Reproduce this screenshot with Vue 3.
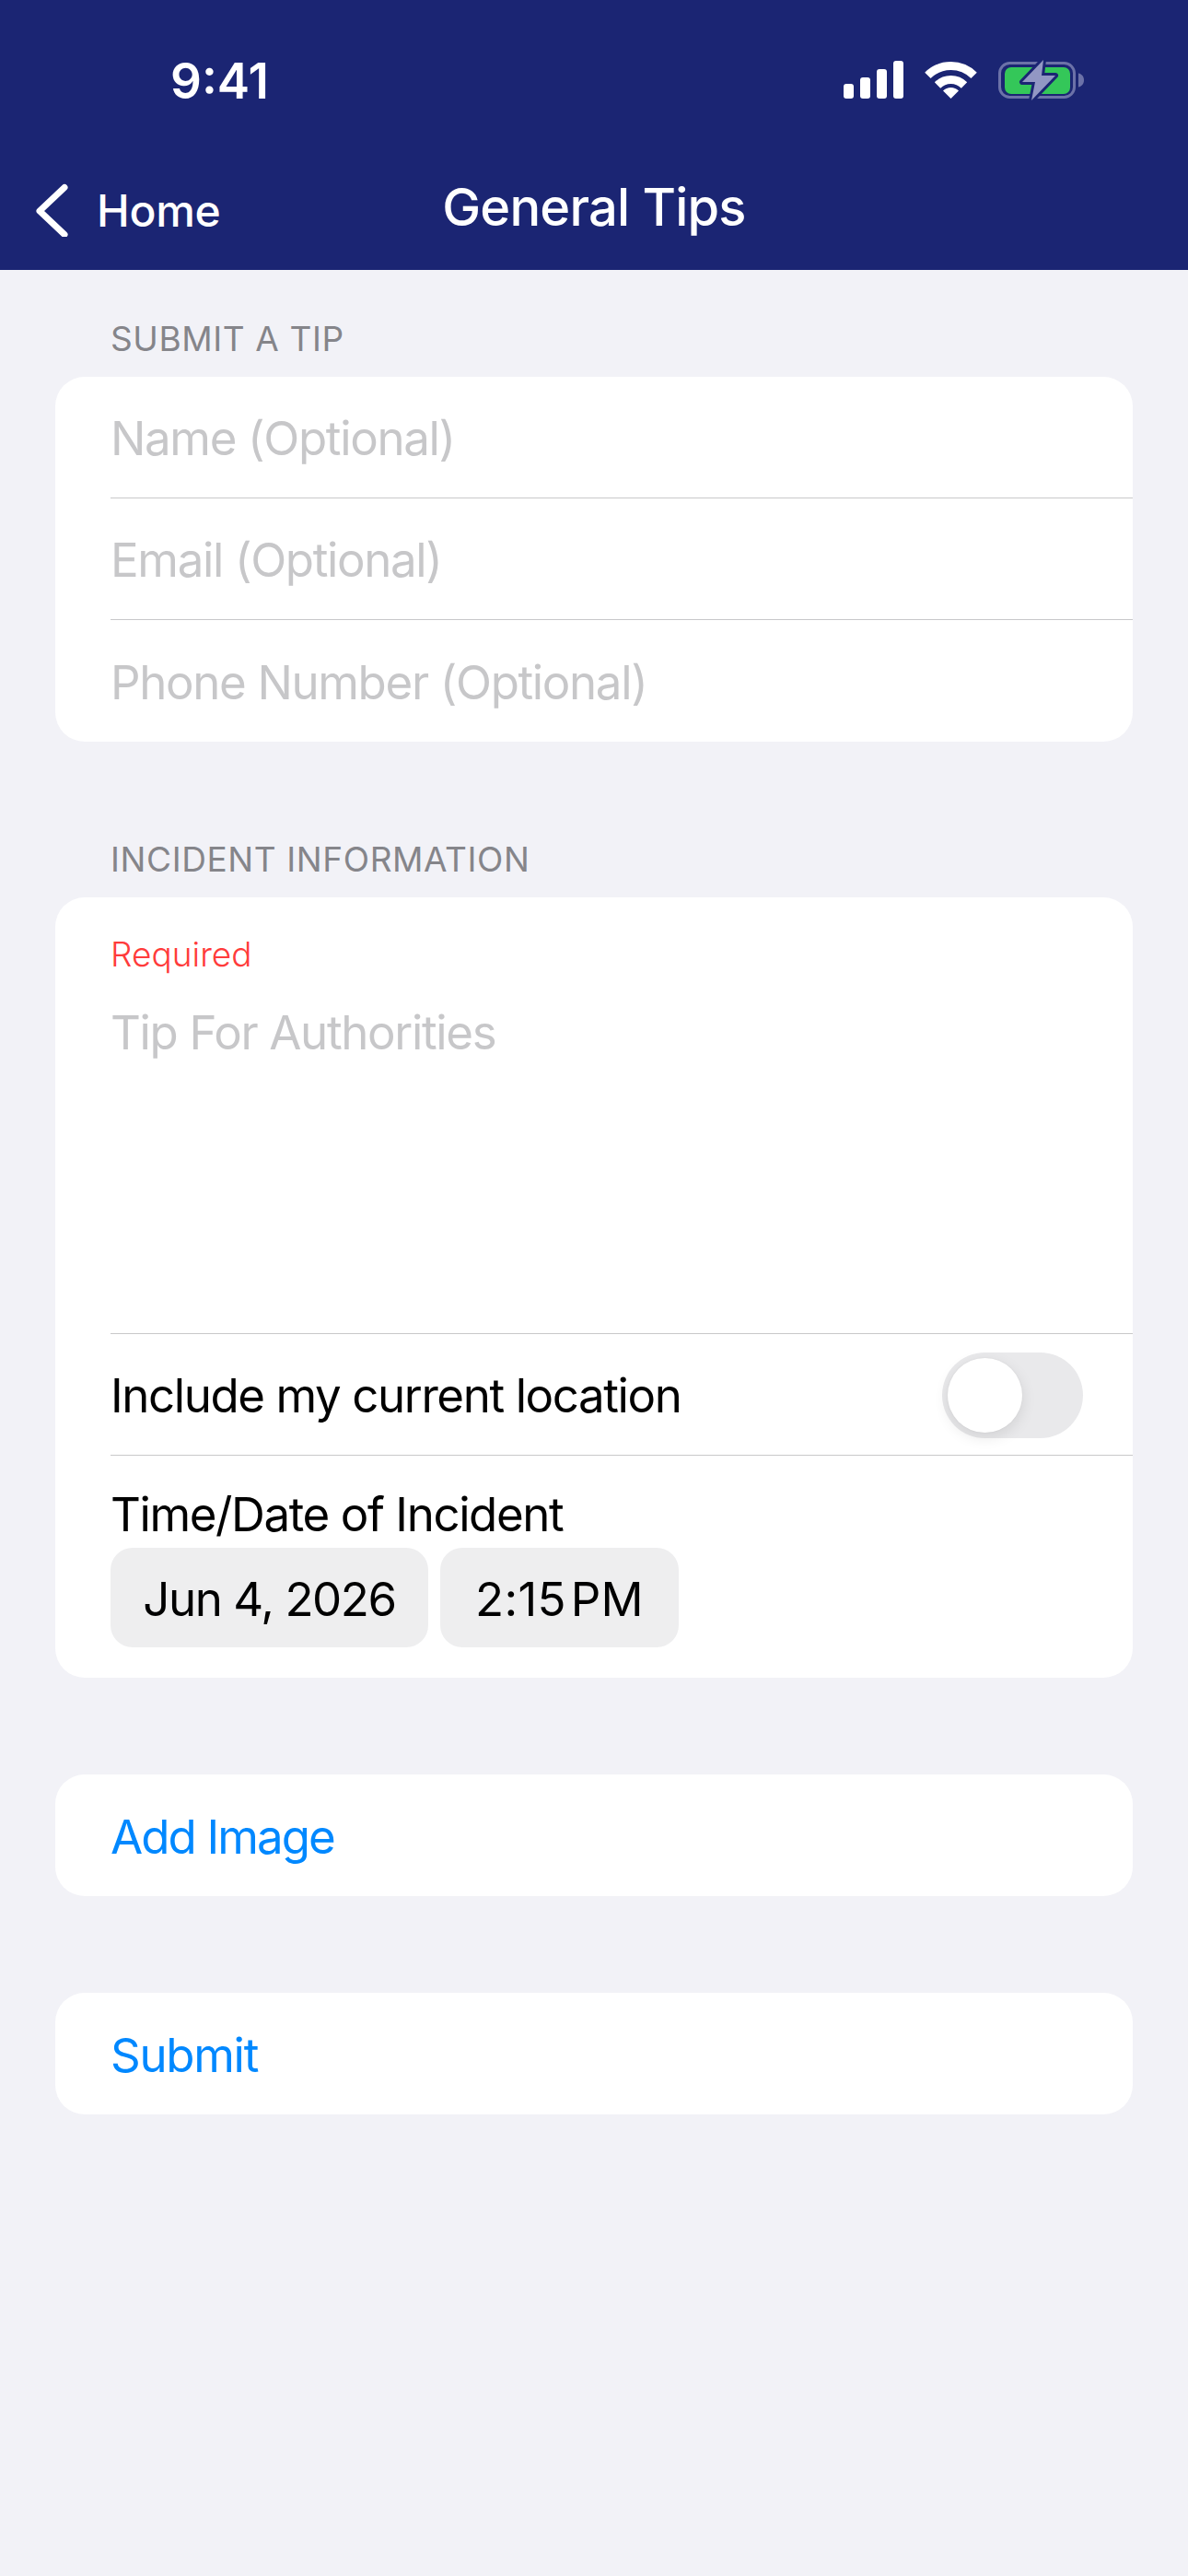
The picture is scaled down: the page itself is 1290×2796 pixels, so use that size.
<template>
  <div class="screen">
    <header class="nav">
      <div class="status">
        <span class="clock">9:41</span>
        <div class="status-icons">
          <svg class="signal" width="65" height="41" viewBox="0 0 65 41">
            <rect x="0" y="25" width="11" height="16" rx="3" />
            <rect x="18" y="18" width="11" height="23" rx="3" />
            <rect x="36" y="9" width="11" height="32" rx="3" />
            <rect x="54" y="0" width="11" height="41" rx="3" />
          </svg>
          <svg class="wifi" width="57" height="40" viewBox="0 0 57 40">
            <path d="M3.4 14.9A35.5 35.5 0 0 1 53.6 14.9" fill="none" stroke="#fff" stroke-width="9" />
            <path d="M14 25.5A20.5 20.5 0 0 1 43 25.5" fill="none" stroke="#fff" stroke-width="9" />
            <path d="M28.5 40L20 31.5A12 12 0 0 1 37 31.5Z" fill="#fff" />
          </svg>
          <svg class="battery" width="93" height="46" viewBox="0 0 93 46">
            <rect x="1.5" y="4.500" width="81" height="37" rx="11" fill="none" stroke="#6c72a8" stroke-width="3" />
            <rect x="7" y="9" width="71" height="29" rx="7" fill="#34c759" />
            <path d="M87 15.500c3 .5 6 3 6 7.500s-3 7-6 7.500Z" fill="#6c72a8" />
            <path d="M49 1L26 25H40L36 45L62 18H47Z" fill="#9297c4" stroke="#1b2573" stroke-width="6" stroke-linejoin="round" paint-order="stroke" />
          </svg>
        </div>
      </div>
      <div class="titlebar">
        <div class="back">
          <svg width="40" height="60" viewBox="0 0 40 60">
            <path d="M33 6.500L6 32L33 57.500" fill="none" stroke="#fff" stroke-width="7" stroke-linecap="round" stroke-linejoin="round" />
          </svg>
          <span class="back-label">Home</span>
        </div>
        <h1>General Tips</h1>
      </div>
    </header>

    <main class="form">
      <h2 class="section-label">Submit a tip</h2>
      <section class="card">
        <div v-for="field in contactFields" :key="field" class="row">
          <span class="placeholder">{{ field }}</span>
        </div>
      </section>

      <h2 class="section-label second">Incident information</h2>
      <section class="card">
        <div class="tip-box">
          <span class="required">Required</span>
          <span class="placeholder">Tip For Authorities</span>
        </div>
        <div class="row">
          <span>Include my current location</span>
          <div class="toggle"><div class="knob"></div></div>
        </div>
        <div class="row when">
          <span class="when-label">Time/Date of Incident</span>
          <div class="pills">
            <span class="pill date">Jun 4, 2026</span>
            <span class="pill time">2:15&#8202;PM</span>
          </div>
        </div>
      </section>

      <section class="card action-card">
        <div class="row"><span class="link add">Add Image</span></div>
      </section>
      <section class="card action-card">
        <div class="row"><span class="link">Submit</span></div>
      </section>
    </main>
  </div>
</template>

<script setup>
const contactFields = ['Name (Optional)', 'Email (Optional)', 'Phone Number (Optional)']
</script>

<style scoped>
.screen {
  width: 1290px;
  height: 2796px;
  background: #f2f2f7;
  font-family: Inter, "Liberation Sans", sans-serif;
  color: #000;
  overflow: hidden;
}

.nav {
  height: 293px;
  box-sizing: border-box;
  background: #1b2573;
  color: #fff;
}

.status {
  height: 195px;
  display: flex;
  justify-content: space-between;
  align-items: flex-start;
  padding: 64px 113px 0 185px;
  box-sizing: border-box;
}

.clock {
  font-size: 53px;
  font-weight: 600;
  line-height: 48px;
}

.status-icons {
  display: flex;
  align-items: flex-start;
  gap: 23px;
}

.signal { fill: #fff; margin-top: 2px; }
.wifi { margin-top: 3px; }

.titlebar {
  position: relative;
  height: 60px;
  display: flex;
  align-items: center;
  justify-content: center;
}

.back {
  position: absolute;
  left: 37px;
  top: 0;
  display: flex;
  align-items: center;
  gap: 28px;
  font-size: 48px;
  font-weight: 500;
  letter-spacing: -0.3px;
}

.back-label {
  margin-top: 4px;
}

.titlebar h1 {
  margin: 0;
  font-size: 56px;
  font-weight: 550;
  letter-spacing: -0.8px;
}

.form {
  display: flex;
  flex-direction: column;
  padding: 0 60px;
}

.section-label {
  margin: 0;
  height: 116px;
  box-sizing: border-box;
  display: flex;
  align-items: flex-end;
  padding: 0 0 19px 60px;
  font-size: 37px;
  font-weight: 400;
  line-height: 44px;
  letter-spacing: 0.6px;
  color: #85858a;
  text-transform: uppercase;
}

.section-label.second {
  height: 169px;
}

.card {
  background: #fff;
  border-radius: 32px;
  overflow: hidden;
}

.action-card {
  margin-top: 105px;
}

.row {
  height: 132px;
  margin-left: 60px;
  padding: 2px 54px 0 0;
  box-sizing: border-box;
  display: flex;
  align-items: center;
  justify-content: space-between;
  font-size: 51px;
  letter-spacing: -1.4px;
  border-bottom: 1px solid #c8c8ca;
}

.row:last-child {
  border-bottom: none;
}

.placeholder {
  color: #c7c7c9;
  font-size: 51px;
  letter-spacing: -1.35px;
}

.tip-box {
  height: 474px;
  margin-left: 60px;
  padding-top: 40px;
  box-sizing: border-box;
  display: flex;
  flex-direction: column;
  border-bottom: 1px solid #c8c8ca;
}

.required {
  color: #ff3b3b;
  font-size: 37px;
  font-weight: 300;
  line-height: 44px;
  margin-bottom: 32px;
}

.toggle {
  width: 153px;
  height: 93px;
  border-radius: 47px;
  background: #e9e9eb;
  padding: 6px;
  box-sizing: border-box;
}

.knob {
  width: 81px;
  height: 81px;
  border-radius: 50%;
  background: #fff;
  box-shadow: 0 5px 16px rgba(0, 0, 0, 0.1), 0 0 2px rgba(0, 0, 0, 0.06);
}

.row.when {
  height: 241px;
  display: block;
  padding-top: 34px;
}

.when-label {
  display: block;
  line-height: 60px;
}

.pills {
  display: flex;
  gap: 13px;
  margin-top: 6px;
}

.pill {
  height: 108px;
  padding-top: 2px;
  box-sizing: border-box;
  border-radius: 24px;
  background: #eeeeef;
  display: flex;
  align-items: center;
  justify-content: center;
}

.pill.date { width: 345px; }
.pill.time { width: 259px; letter-spacing: 0.3px; }

.link {
  color: #0088ff;
  letter-spacing: -1.3px;
}

.link.add {
  letter-spacing: -1.9px;
}
</style>
